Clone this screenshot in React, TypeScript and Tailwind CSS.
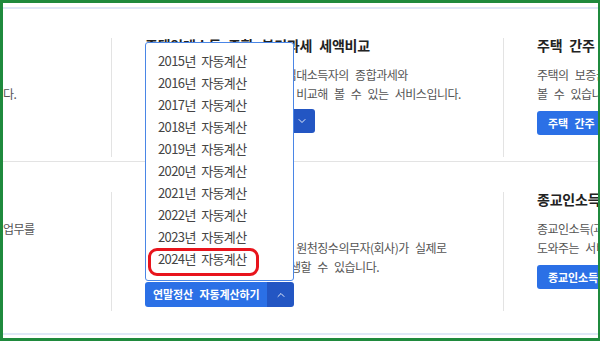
import React from 'react';
import { ChevronDown, ChevronUp } from 'lucide-react';

const years = [2015, 2016, 2017, 2018, 2019, 2020, 2021, 2022, 2023, 2024];

const SplitButton = ({ label, up, wide }: { label: string; up?: boolean; wide?: boolean }) => (
  <div
    className={`flex overflow-hidden rounded-[3px] text-white ${wide ? 'h-[24px] w-[170px]' : 'h-[25px] w-[149px]'}`}
  >
    <div className="flex flex-1 items-center pl-[8px] text-[11px] font-semibold tracking-[-0.1px] [word-spacing:4px] whitespace-nowrap bg-[#2b70e6]">
      {label}
    </div>
    <div className="flex w-[27px] items-center justify-center bg-[#2356c3]">
      {up ? <ChevronUp size={12} strokeWidth={1.75} /> : <ChevronDown size={12} strokeWidth={1.75} />}
    </div>
  </div>
);

const BlueButton = ({ label }: { label: string }) => (
  <div className="inline-flex h-[24px] items-center rounded-[3px] bg-[#2b70e6] px-[11px] text-[11px] font-semibold tracking-[-0.1px] [word-spacing:4px] text-white whitespace-nowrap">
    {label}
  </div>
);

const Title = ({ children }: { children: React.ReactNode }) => (
  <h3 className="h-[15px] text-[14px] leading-[15px] font-semibold tracking-[-0.2px] [word-spacing:4px] text-[#222] whitespace-nowrap">
    {children}
  </h3>
);

const Desc = ({ children }: { children: React.ReactNode }) => (
  <p className="mt-[12px] text-[12px] leading-[19px] tracking-[-0.5px] [word-spacing:4px] text-[#555] whitespace-nowrap">
    {children}
  </p>
);

const App = () => {
  return (
    <div className="w-[600px] h-[341px] overflow-hidden bg-white border-t-[3px] border-l-[3px] border-r-[2px] border-b-[3px] border-[#1f8a3d] font-['Noto_Sans_CJK_KR','Noto_Sans',sans-serif]">
      <div className="h-[4px]" />
      <div className="h-[2px] bg-[#dfe8f7]" />

      {/* Row 1 */}
      <div className="flex pt-[29px] pb-[4px]">
        <div className="w-[108px] h-[119px] shrink-0 overflow-hidden">
          <div className="h-[15px]" />
          <Desc>
            &nbsp;
            <br />
            다.
          </Desc>
        </div>
        <div className="w-[392px] h-[119px] shrink-0 border-l border-[#e3e3e3] pl-[33px]">
          <Title>주택임대소득 종합·분리과세 세액비교</Title>
          <Desc>
            수입금액 2천만원 이하 주택임대소득자의 종합과세와
            <br />
            분리과세 선택 시 납부세액을 비교해 볼 수 있는 서비스입니다.
          </Desc>
          <div className="mt-[6px]">
            <SplitButton label="주택임대소득 세액 비교하기" wide />
          </div>
        </div>
        <div className="flex-1 h-[119px] min-w-0 border-l border-[#e3e3e3] pl-[33px]">
          <Title>주택 간주 임대료 계산</Title>
          <Desc>
            주택의 보증금 등에 대한 간주임대료를 계산해
            <br />
            볼 수 있습니다.
          </Desc>
          <div className="mt-[6px]">
            <BlueButton label="주택 간주 임대료 계산하기" />
          </div>
        </div>
      </div>

      <div className="h-px bg-[#e3e3e3]" />

      {/* Row 2 */}
      <div className="flex pt-[30px] pb-[22px]">
        <div className="w-[108px] h-[119px] shrink-0 overflow-hidden">
          <div className="h-[15px]" />
          <Desc>업무를</Desc>
        </div>
        <div className="w-[392px] h-[119px] shrink-0 border-l border-[#e3e3e3] pl-[33px]">
          <Title>연말정산 자동계산</Title>
          <Desc>
            연말정산 자동계산으로
            <br />
            세액을 계산해보면 근로자 및 원천징수의무자(회사)가 실제로
            <br />
            환급세액 또는 납부세액이 발생할 수 있습니다.
          </Desc>
          <div className="relative mt-[6px]">
            {/* year dropdown opened upward */}
            <div className="absolute left-0 bottom-[26px] w-[149px] h-[239px] rounded-[3px] border border-[#4a86e6] bg-white pt-[7px]">
              {years.map((y) => (
                <div
                  key={y}
                  className="h-[22px] pl-[12px] text-[13px] leading-[22px] tracking-[-0.6px] [word-spacing:3px] text-[#444] whitespace-nowrap"
                >
                  {y}년 자동계산
                </div>
              ))}
              <div className="absolute left-[2px] top-[205px] w-[111px] h-[28px] rounded-[9px] border-[3px] border-[#e8141c]" />
            </div>
            <SplitButton label="연말정산 자동계산하기" up />
          </div>
        </div>
        <div className="flex-1 h-[119px] min-w-0 border-l border-[#e3e3e3] pl-[33px]">
          <Title>종교인소득 원천징수</Title>
          <Desc>
            종교인소득(과세대상) 원천징수 신고를
            <br />
            도와주는 서비스입니다.
          </Desc>
          <div className="mt-[6px]">
            <BlueButton label="종교인소득 간편계산" />
          </div>
        </div>
      </div>

      <div className="h-[2px] bg-[#dfe8f7]" />
    </div>
  );
};

export default App;
